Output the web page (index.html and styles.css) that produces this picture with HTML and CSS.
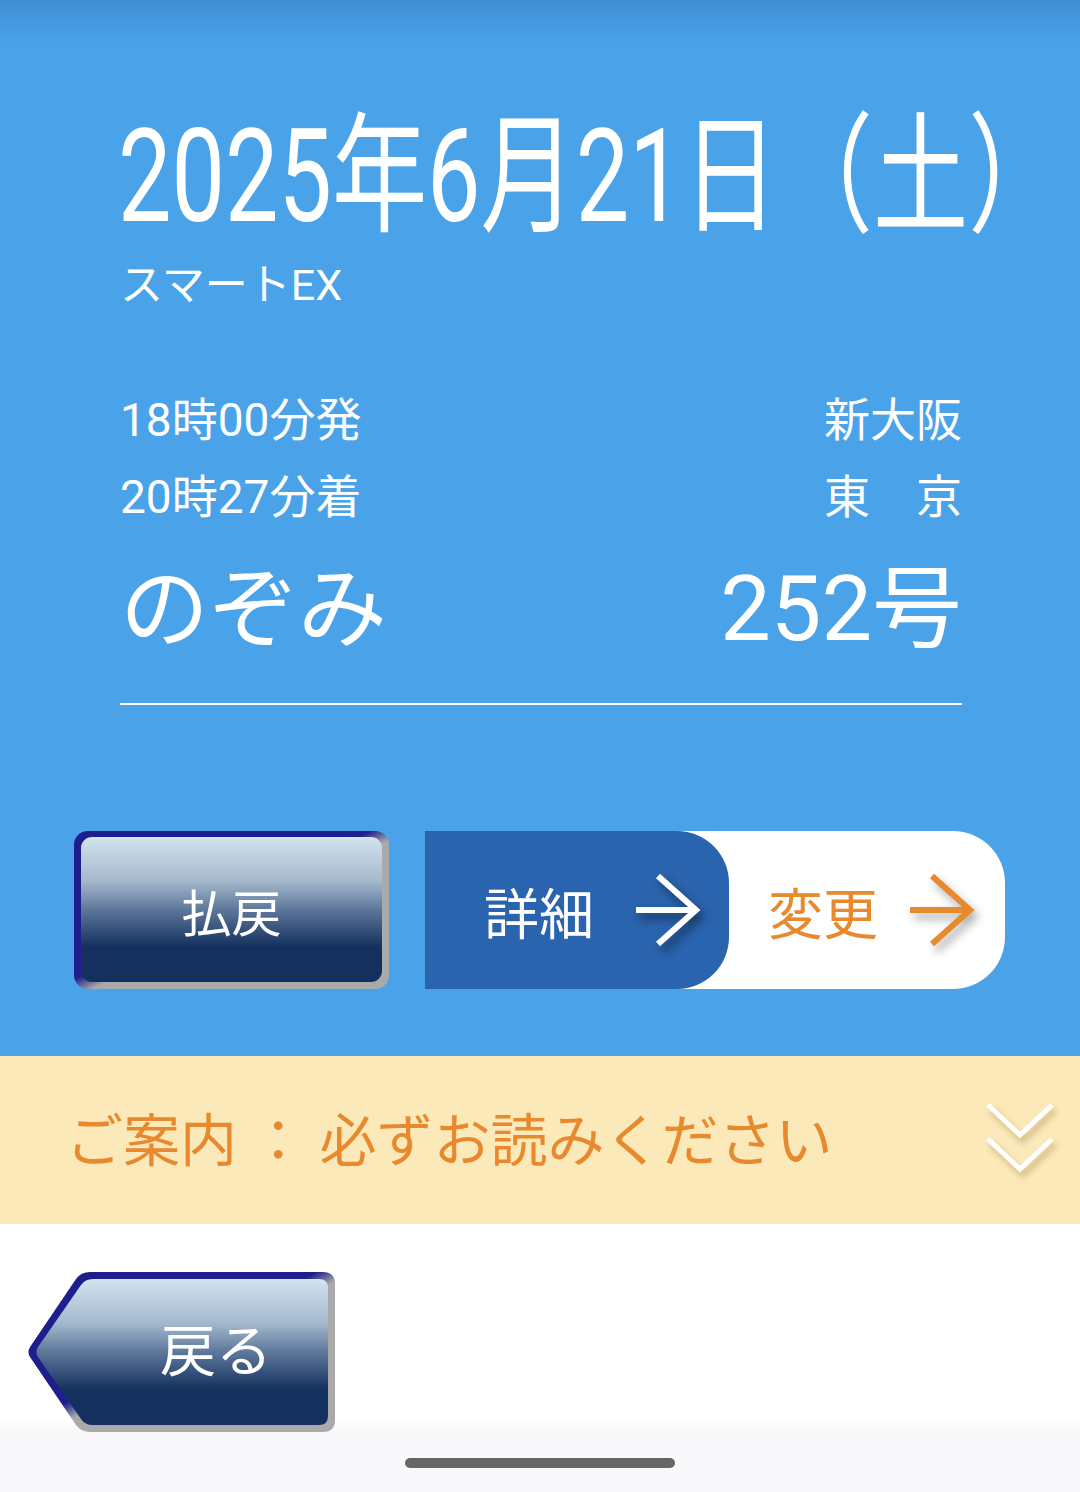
FILE: index.html
```html
<!DOCTYPE html>
<html lang="ja">
<head>
    <meta charset="UTF-8">
    <meta name="viewport" content="width=device-width, initial-scale=1.0">
    <title>スマートEX 予約詳細</title>
    <link rel="stylesheet" href="styles.css">
</head>
<body>
    <div class="screen">
        <section class="ticket">
            <div class="date"><span class="date-text">2025年6月21日（土）</span></div>
            <div class="service">スマートEX</div>

            <div class="times">
                <div class="row"><span>18時00分発</span><span>新大阪</span></div>
                <div class="row"><span>20時27分着</span><span>東　京</span></div>
            </div>

            <div class="train">
                <span class="train-name">のぞみ</span>
                <span class="train-num">252号</span>
            </div>
            <hr>

            <div class="actions">
                <button class="refund">
                    <span class="refund-inner">払戻</span>
                </button>
                <div class="combo">
                    <button class="detail">
                        <span>詳細</span>
                        <svg class="arrow" width="70" height="76" viewBox="0 0 70 76">
                            <path d="M2 38 H62 M24 4 L62 38 L24 72" fill="none" stroke="#fff" stroke-width="6"/>
                        </svg>
                    </button>
                    <button class="change">
                        <span>変更</span>
                        <svg class="arrow" width="70" height="76" viewBox="0 0 70 76">
                            <path d="M2 38 H62 M24 4 L62 38 L24 72" fill="none" stroke="#e8892e" stroke-width="6"/>
                        </svg>
                    </button>
                </div>
            </div>
        </section>

        <section class="notice">
            <span class="notice-text">ご案内 ： 必ずお読みください</span>
            <svg class="chevrons" width="72" height="82" viewBox="0 0 72 82">
                <path d="M4 4 L36 34 L68 4 M4 38 L36 68 L68 38" fill="none" stroke="#fff" stroke-width="5"/>
            </svg>
        </section>

        <section class="bottom">
            <button class="back">
                <svg class="back-shape" width="310" height="162" viewBox="0 0 310 162">
                    <defs>
                        <linearGradient id="backEdge" x1="0" y1="0" x2="1" y2="1">
                            <stop offset="0.47" stop-color="#1e1e8c"/>
                            <stop offset="0.53" stop-color="#aaaaaa"/>
                        </linearGradient>
                        <linearGradient id="backFill" x1="0" y1="0" x2="0" y2="1">
                            <stop offset="0" stop-color="#d3e3ef"/>
                            <stop offset="0.3" stop-color="#a5b9cd"/>
                            <stop offset="0.5" stop-color="#5e789b"/>
                            <stop offset="0.76" stop-color="#13305e"/>
                            <stop offset="1" stop-color="#13305e"/>
                        </linearGradient>
                    </defs>
                    <path d="M4 76 L50 8 Q55 1 64 1 L297 1 Q309 1 309 13 L309 149 Q309 161 297 161 L64 161 Q55 161 50 154 L4 86 Q1 81 4 76 Z" fill="url(#backEdge)"/>
                    <path d="M12 76 L55 14 Q59 8 67 8 L293 8 Q302 8 302 17 L302 145 Q302 154 293 154 L67 154 Q59 154 55 148 L12 86 Q9 81 12 76 Z" fill="url(#backFill)"/>
                </svg>
                <span class="back-label">戻る</span>
            </button>
            <div class="pill"></div>
        </section>
    </div>
</body>
</html>
```

FILE: styles.css
```css
body {
    margin: 0;
    padding: 0;
    font-family: "Roboto", "Noto Sans CJK JP", sans-serif;
    color: #fff;
}

.screen {
    width: 1080px;
    height: 1492px;
    overflow: hidden;
    display: flex;
    flex-direction: column;
}

button {
    font-family: inherit;
    border: none;
    padding: 0;
    margin: 0;
    cursor: pointer;
    background: none;
}

/* ticket area */
.ticket {
    height: 1056px;
    box-sizing: border-box;
    padding: 109px 118px 0 120px;
    background: linear-gradient(to bottom, #3f8fd5 0, #4aa3e8 46px, #4aa3e8 100%);
}

.date {
    height: 136px;
    line-height: 136px;
    white-space: nowrap;
}

.date-text {
    display: inline-block;
    font-size: 130px;
    transform: scaleX(0.732);
    transform-origin: left center;
    margin-left: -2px;
    margin-right: -330px;
}

.service {
    font-size: 43px;
    line-height: 56px;
    margin-top: 12px;
}

.times {
    margin-top: 69px;
}

.row {
    display: flex;
    justify-content: space-between;
    font-size: 46px;
    line-height: 77px;
}

.train {
    display: flex;
    justify-content: space-between;
    align-items: center;
    font-size: 89px;
    line-height: 110px;
    margin-top: 19px;
}

.train-num {
    font-size: 90px;
}

hr {
    margin: 38px 0 0;
    border: 0;
    border-top: 2px solid #fff;
}

.actions {
    display: flex;
    margin: 126px -43px 0 -46px;
    gap: 36px;
    height: 158px;
}

.refund {
    width: 315px;
    box-sizing: border-box;
    padding: 6px 7px 7px 7px;
    border-radius: 14px;
    background: linear-gradient(to bottom right, #1e1e8c 47%, #aaaaaa 53%);
    display: flex;
}

.refund-inner {
    flex: 1;
    border-radius: 11px;
    background: linear-gradient(to bottom, #d3e3ef 0, #a5b9cd 30%, #5e789b 50%, #13305e 76%, #13305e 100%);
    color: #fff;
    font-size: 50px;
    display: flex;
    align-items: center;
    justify-content: center;
}

.combo {
    flex: 1;
    display: flex;
    background: #fff;
    border-radius: 0 52px 52px 0;
}

.detail, .change {
    display: flex;
    align-items: center;
    font-size: 55px;
}

.detail {
    width: 304px;
    background: #2a63ae;
    border-radius: 0 52px 52px 0;
    color: #fff;
    padding-left: 59px;
    box-sizing: border-box;
}

.change {
    color: #e8892e;
    padding-left: 39px;
}

.detail .arrow {
    margin-left: 40px;
    filter: drop-shadow(4px 6px 5px rgba(0, 0, 0, 0.45));
}

.change .arrow {
    margin-left: 30px;
    filter: drop-shadow(4px 6px 5px rgba(0, 0, 0, 0.35));
}

/* notice */
.notice {
    height: 168px;
    background: #fbe9ba;
    display: flex;
    align-items: center;
    justify-content: space-between;
    padding: 0 24px 0 66px;
}

.notice-text {
    color: #e8892e;
    font-size: 57px;
    font-family: "Noto Sans CJK JP", sans-serif;
    margin-top: -8px;
}

.chevrons {
    margin-top: 4px;
    filter: drop-shadow(3px 5px 3px rgba(150, 120, 50, 0.45));
}

/* bottom */
.bottom {
    flex: 1;
    background: linear-gradient(to bottom, #fff 0, #fff 196px, #f8f8fa 206px);
    padding-top: 47px;
    display: flex;
    flex-direction: column;
}

.back {
    width: 310px;
    height: 162px;
    margin-left: 26px;
    display: grid;
}

.back-shape, .back-label {
    grid-area: 1 / 1;
}

.back-label {
    color: #fff;
    font-size: 56px;
    font-family: "Noto Sans CJK JP", sans-serif;
    align-self: center;
    justify-self: start;
    margin: 0 0 12px 134px;
}

.pill {
    width: 270px;
    height: 10px;
    border-radius: 5px;
    background: #666;
    margin: 25px auto 0;
}
```
